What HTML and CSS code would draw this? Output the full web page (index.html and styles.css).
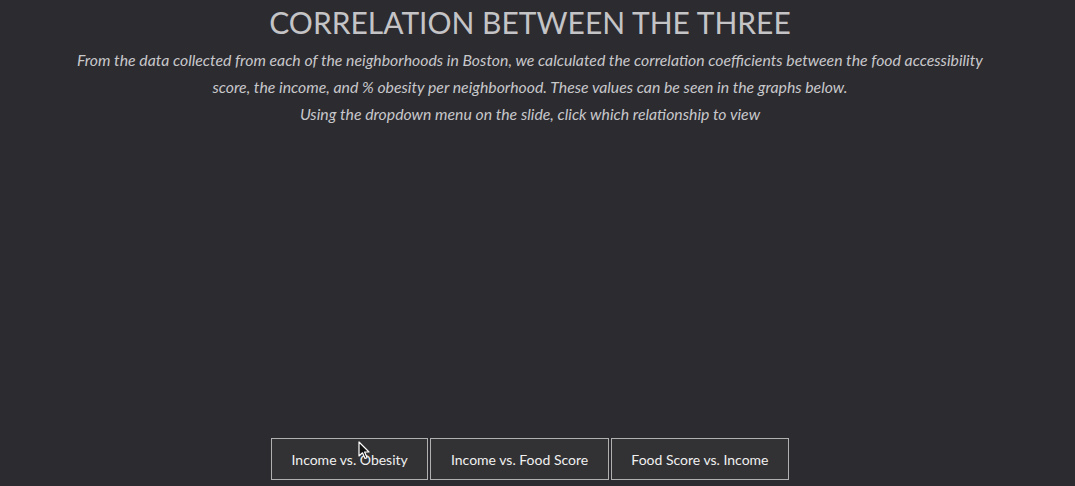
FILE: index.html
```html
<!DOCTYPE html>
<html>
<head>
<meta charset="utf-8">
<link rel="stylesheet" href="styles.css">
</head>
<body>
<main class="page">
  <h1 class="title">CORRELATION BETWEEN THE THREE</h1>
  <p class="intro">From the data collected from each of the neighborhoods in Boston, we calculated the correlation coefficients between the food accessibility score, the income, and % obesity per neighborhood. These values can be seen in the graphs below.<br>Using the dropdown menu on the slide, click which relationship to view</p>
  <div class="chart"></div>
  <div class="buttons">
    <button class="btn">Income vs. Obesity</button>
    <button class="btn">Income vs. Food Score</button>
    <button class="btn">Food Score vs. Income</button>
    <svg class="cursor" width="14" height="20" viewBox="0 0 14 20"><path d="M1 1 L1 15 L4.5 11.8 L7 17.5 L9 16.6 L6.6 11 L11 11 Z" fill="#111" stroke="#fff" stroke-width="1.2" stroke-linejoin="round"/></svg>
  </div>
</main>
</body>
</html>
```
FILE: styles.css
```css
html, body {
  margin: 0;
  padding: 0;
  background: #2c2b30;
  height: 100%;
  overflow: hidden;
}
.page {
  width: 1060px;
  font-family: Lato, "Open Sans", sans-serif;
  color: #c5c5c8;
  text-align: center;
  display: flex;
  flex-direction: column;
  align-items: center;
}
.title {
  margin: 4px 0 0;
  font-size: 30px;
  font-weight: 400;
  line-height: 36px;
  color: #c4c4c6;
  letter-spacing: 0;
}
.intro {
  margin: 6px 0 0;
  font-style: italic;
  font-size: 15.8px;
  line-height: 27px;
  color: #c8c8cb;
  max-width: 930px;
}
.chart {
  height: 311px;
}
.buttons {
  position: relative;
  display: flex;
  gap: 2px;
}
.btn {
  font-family: Lato, "Open Sans", sans-serif;
  font-size: 14px;
  color: #f0f0f0;
  background: #323234;
  border: 1px solid #b0b0b0;
  height: 42px;
  padding: 0 19.6px;
  cursor: pointer;
}
.cursor {
  position: absolute;
  left: 87px;
  top: 3px;
}
```
